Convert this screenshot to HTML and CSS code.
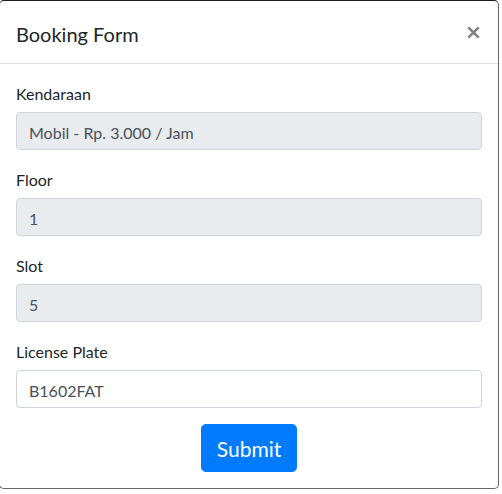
FILE: index.html
```html
<!DOCTYPE html>
<html>
<head>
<meta charset="utf-8">
<link rel="stylesheet" href="styles.css">
</head>
<body>
<div class="modal-content">
  <div class="modal-header">
    <h5 class="modal-title">Booking Form</h5>
    <button class="close" type="button" aria-label="Close">
      <svg class="close-icon" width="13" height="13" viewBox="0 0 13 13"><path d="M1.3 1.3L11.7 11.7M11.7 1.3L1.3 11.7" stroke="#808080" stroke-width="2.6" stroke-linecap="butt"/></svg>
    </button>
  </div>
  <form class="modal-body">
    <div class="form-group">
      <label class="label">Kendaraan</label>
      <input class="form-control" type="text" value="Mobil - Rp. 3.000 / Jam" disabled>
    </div>
    <div class="form-group">
      <label class="label">Floor</label>
      <input class="form-control" type="text" value="1" disabled>
    </div>
    <div class="form-group">
      <label class="label">Slot</label>
      <input class="form-control" type="text" value="5" disabled>
    </div>
    <div class="form-group">
      <label class="label">License Plate</label>
      <input class="form-control" type="text" value="B1602FAT">
    </div>
    <div class="actions">
      <button class="btn-submit" type="submit">Submit</button>
    </div>
  </form>
</div>
</body>
</html>
```
FILE: styles.css
```css
* { box-sizing: border-box; }
html, body {
  margin: 0;
  padding: 0;
  background: #fff;
}
body {
  font-family: Lato, "Noto Sans", sans-serif;
  font-size: 16px;
  line-height: 24px;
  color: #212529;
}
.modal-content {
  width: 500px;
  margin-left: -1px;
  background: #fff;
  border: 1px solid #666;
  border-top-color: #1c1c1c;
  border-radius: 4.8px;
  display: flex;
  flex-direction: column;
}
.modal-header {
  display: flex;
  align-items: flex-start;
  justify-content: space-between;
  padding: 16px;
  border-bottom: 1px solid #dee2e6;
}
.modal-title {
  margin: 0;
  font-size: 20px;
  font-weight: 400;
  line-height: 30px;
  padding-top: 2px;
  height: 30px;
}
.close {
  margin: -16px -16px -16px auto;
  padding: 25px 18px 0 0;
  width: 49px;
  height: 62px;
  display: flex;
  justify-content: flex-end;
  align-items: flex-start;
  background: transparent;
  border: 0;
}
.close-icon {
  display: block;
}
.modal-body {
  margin: 0;
  padding: 16px;
  display: flex;
  flex-direction: column;
}
.form-group {
  display: flex;
  flex-direction: column;
  margin-bottom: 16px;
}
.label {
  margin-bottom: 8px;
  line-height: 24px;
  height: 24px;
  padding-top: 2px;
}
.form-control {
  height: 38px;
  padding: 7px 12px 5px;
  font-family: inherit;
  font-size: 16px;
  line-height: 24px;
  color: #495057;
  background: #fff;
  border: 1px solid #ced4da;
  border-radius: 4px;
  width: 100%;
}
.form-control:disabled {
  background: #e9ecef;
  opacity: 1;
  color: #495057;
  -webkit-text-fill-color: #495057;
}
.actions {
  display: flex;
  justify-content: center;
}
.btn-submit {
  width: 96px;
  height: 48px;
  padding: 9px 0 7px;
  font-family: inherit;
  font-size: 21px;
  line-height: 30px;
  color: #fff;
  background: #007bff;
  border: 1px solid #007bff;
  border-radius: 4.8px;
}
```
